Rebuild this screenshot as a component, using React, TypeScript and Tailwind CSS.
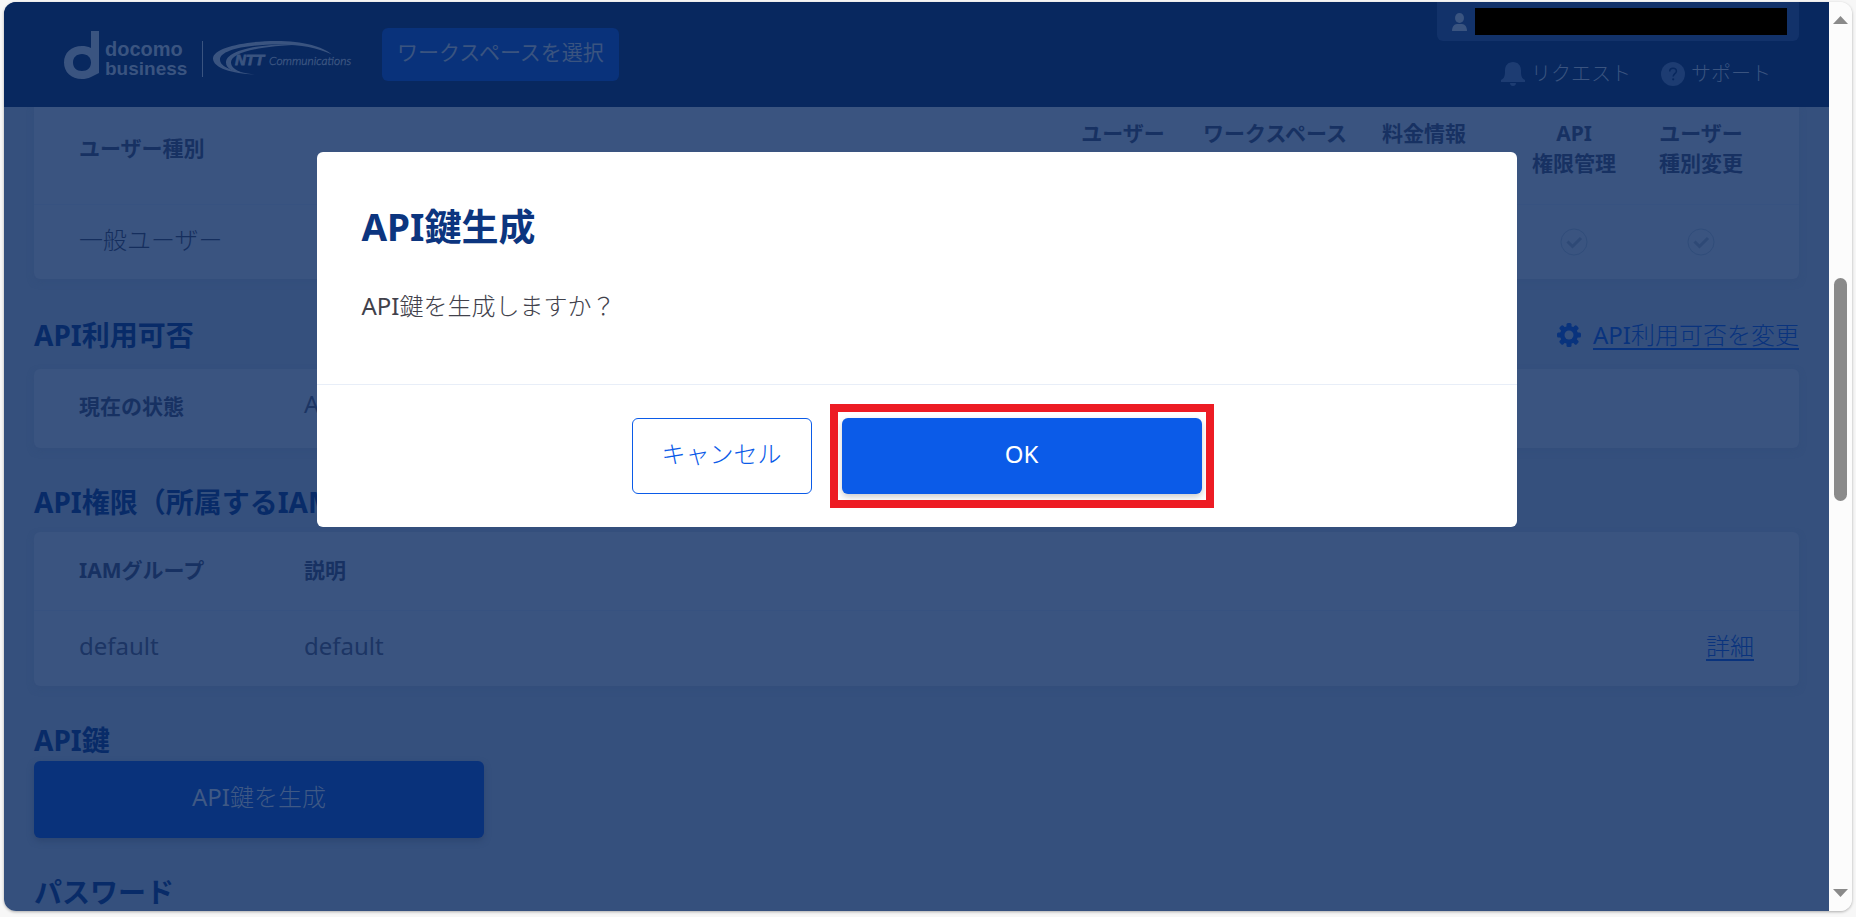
import type { ReactNode } from 'react'

const permissionColumns = [
  { lines: ['ユーザー'], width: 'w-[154px]' },
  { lines: ['ワークスペース'], width: 'w-[150px]' },
  { lines: ['料金情報'], width: 'w-[148px]' },
  { lines: ['API', '権限管理'], width: 'w-[152px]' },
  { lines: ['ユーザー', '種別変更'], width: 'w-[102px]' },
]

function Logo() {
  return (
    <svg width="290" height="52" viewBox="0 0 290 52" fill="#3a5480" role="img" aria-label="docomo business NTT Communications">
      <path
        fillRule="evenodd"
        d="M27 2h8v42l-8 4c-3 1.500-6 2-9 2C7 50 0 43 0 33.500S7 17 18 17c3 0 6 .6 9 2zM18 25c-5.500 0-9 3.500-9 8.500s3.500 8.500 9 8.500 9-3.500 9-8.500-3.500-8.500-9-8.500z"
      />
      <g fontWeight="700" fontFamily="'Liberation Sans', sans-serif">
        <text x="41" y="27" fontSize="20">docomo</text>
        <text x="41" y="46" fontSize="19">business</text>
      </g>
      <rect x="138" y="12" width="1" height="36" />
      <path d="M191 45.500C168 44.500 149 39 149 29.500 149 19 180 12 212 12c28 0 46 5.500 56 13.500-14-6.500-31-10-52-10-36 0-60 6-60 15 0 8 14 12.500 35 15z" />
      <path d="M240 15.500c-40-2-78 5-78 18 0 6 7 9.500 17 10.500-8-3-12-6-12-10.500 0-9 23-16.500 73-18z" />
      <text y="36" fontStyle="italic">
        <tspan x="171" fontSize="15" fontWeight="700" stroke="#3a5480" strokeWidth=".8" fontFamily="'Liberation Sans', sans-serif">NTT</tspan>
        <tspan x="205" fontSize="12" stroke="#3a5480" strokeWidth=".4" fontFamily="Lato, sans-serif">Communications</tspan>
      </text>
    </svg>
  )
}

function UserIcon() {
  return (
    <svg width="15" height="18" viewBox="0 0 15 18" fill="#3a5480" aria-hidden="true">
      <ellipse cx="7.500" cy="5" rx="4.500" ry="5" />
      <path d="M0 18c0-4 2-7 5-7h5c3 0 5 3 5 7z" />
    </svg>
  )
}

function BellIcon() {
  return (
    <svg width="24" height="24" viewBox="0 0 24 24" fill="#1d3c72" aria-hidden="true">
      <path d="M12 0c5 0 8 3.500 8 8.500 0 5 .5 8 4 9.500v2H0v-2c3.500-1.500 4-4.500 4-9.500C4 3.500 7 0 12 0zM9 21h6c0 2-1.200 3-3 3s-3-1-3-3z" />
    </svg>
  )
}

function HelpIcon() {
  return (
    <svg width="24" height="24" viewBox="0 0 24 24" aria-hidden="true">
      <circle cx="12" cy="12" r="12" fill="#1d3c72" />
      <path d="M8.700 9.500c0-2 1.300-3.300 3.300-3.300s3.400 1.200 3.400 3c0 2.400-3.200 2.600-3.200 5.300" fill="none" stroke="#08285f" strokeWidth="1.500" />
      <circle cx="12.200" cy="17.300" r="1.100" fill="#08285f" />
    </svg>
  )
}

function GearIcon() {
  return (
    <svg width="24" height="24" viewBox="0 0 24 24" aria-hidden="true">
      <g fill="#09337d">
        <rect x="9.500" y="0" width="5" height="24" rx="1.500" />
        <rect x="9.500" y="0" width="5" height="24" rx="1.500" transform="rotate(45 12 12)" />
        <rect x="9.500" y="0" width="5" height="24" rx="1.500" transform="rotate(90 12 12)" />
        <rect x="9.500" y="0" width="5" height="24" rx="1.500" transform="rotate(135 12 12)" />
        <circle cx="12" cy="12" r="9" />
      </g>
      <circle cx="12" cy="12" r="4.500" fill="#35507d" />
    </svg>
  )
}

function CheckIcon() {
  return (
    <svg className="mx-auto" width="28" height="28" viewBox="0 0 28 28" fill="none" aria-hidden="true">
      <circle cx="14" cy="14" r="13" stroke="#314d7a" />
      <path d="M7.500 13.500l5 5 8.500-8.500" stroke="#2e4976" strokeWidth="3" />
    </svg>
  )
}

function Heading({ children }: { children: ReactNode }) {
  return <h2 className="text-[28px] leading-9 font-bold text-[#082b68]">{children}</h2>
}

function Header() {
  return (
    <header className="flex h-[105px] shrink-0 items-center bg-[#08285f] font-light">
      <a href="#" className="ml-[60px]">
        <Logo />
      </a>
      <button type="button" className="ml-7 h-[53px] rounded-md bg-[#09327b] px-[15px] pb-1 text-[21px] font-normal text-[#3a5480]">
        ワークスペースを選択
      </button>
      <div className="mr-[30px] ml-auto flex flex-col items-end self-start">
        <div className="flex h-[39px] items-center gap-2 rounded-b-md bg-[#12326a] pr-3 pl-[15px]">
          <UserIcon />
          <div className="h-[27px] w-[312px] bg-black" />
        </div>
        <nav className="mt-[17px] mr-7 flex gap-[30px] text-xl leading-8 text-[#3a5480]">
          <a href="#" className="flex items-center gap-1.5">
            <BellIcon />
            リクエスト
          </a>
          <a href="#" className="flex items-center gap-1.5">
            <HelpIcon />
            サポート
          </a>
        </nav>
      </div>
    </header>
  )
}

function PermissionTable() {
  return (
    <div className="rounded-b-md bg-[#3a5480] shadow-[0_3px_6px_#334e7b]">
      <table className="w-full table-fixed">
        <thead>
          <tr className="text-[21px] leading-[30px] text-[#173162]">
            <th className="pt-[11px] pb-[26px] pl-[45px] text-left">ユーザー種別</th>
            {permissionColumns.map((col) => (
              <th key={col.lines.join('')} className={`${col.width} pt-[11px] pb-[26px] align-top whitespace-nowrap`}>
                {col.lines.map((line) => (
                  <span key={line} className="block">{line}</span>
                ))}
              </th>
            ))}
            <td className="w-[47px]" />
          </tr>
        </thead>
        <tbody>
          <tr className="h-[74px] border-t border-[#375280] text-2xl text-[#152e5d]">
            <td className="pb-1 pl-[45px]">一般ユーザー</td>
            {permissionColumns.map((col) => (
              <td key={col.lines.join('')}>
                <CheckIcon />
              </td>
            ))}
            <td />
          </tr>
        </tbody>
      </table>
    </div>
  )
}

function Content() {
  return (
    <main className="min-h-0 flex-1 overflow-hidden px-[30px] font-light">
      <PermissionTable />

      <div className="mt-9 flex h-10 items-center justify-between">
        <Heading>API利用可否</Heading>
        <a href="#" className="flex items-center gap-3 text-2xl text-[#09337d]">
          <GearIcon />
          <span className="underline decoration-2 underline-offset-4">
            <span className="font-normal">API</span>利用可否を変更
          </span>
        </a>
      </div>
      <dl className="mt-3.5 flex h-[79px] items-center rounded-md bg-[#3a5480] pl-[45px] shadow-[0_3px_6px_#334e7b]">
        <dt className="w-[225px] pb-0.5 text-[21px] font-bold text-[#173162]">現在の状態</dt>
        <dd className="pb-2 text-2xl text-[#1c3564]">
          <span className="font-normal">API</span>利用可
        </dd>
      </dl>

      <div className="mt-9">
        <Heading>API権限（所属するIAMグループ）</Heading>
      </div>
      <div className="mt-3 rounded-md bg-[#3a5480] shadow-[0_3px_6px_#334e7b]">
        <table className="w-full table-fixed">
          <thead>
            <tr className="h-[79px] text-left text-[21px] text-[#173162]">
              <th className="w-[270px] pl-[45px]">IAMグループ</th>
              <th>説明</th>
              <td className="w-[200px]" />
            </tr>
          </thead>
          <tbody>
            <tr className="h-[75px] border-t border-[#375280] text-2xl text-[#1c3564]">
              <td className="pb-1 pl-[45px] font-normal">default</td>
              <td className="pb-1 font-normal">default</td>
              <td className="pr-[45px] pb-1 text-right">
                <a href="#" className="text-[#09337d] underline decoration-2 underline-offset-4">詳細</a>
              </td>
            </tr>
          </tbody>
        </table>
      </div>

      <div className="mt-9">
        <Heading>API鍵</Heading>
      </div>
      <button type="button" className="mt-[3px] block h-[77px] w-[450px] rounded-md bg-[#09327b] pb-1 text-2xl text-[#3f5985] shadow-[0_3px_6px_#2d4671]">
        <span className="font-normal">API</span>鍵を生成
      </button>

      <div className="mt-9">
        <Heading>パスワード</Heading>
      </div>
    </main>
  )
}

function Dialog() {
  return (
    <div className="absolute inset-0 flex items-start justify-center pt-[150px]">
      <div role="dialog" aria-modal="true" aria-labelledby="dialog-title" className="w-full max-w-[1200px] rounded-md bg-white">
        <div className="px-[45px] pt-12 pb-[60px]">
          <h1 id="dialog-title" className="text-[37px] leading-[54px] font-bold text-[#0c357f]">API鍵生成</h1>
          <p className="mt-[34px] text-2xl leading-9 font-light text-[#41414b]">
            <span className="font-normal">API</span>鍵を生成しますか？
          </p>
        </div>
        <div className="flex justify-center gap-[30px] border-t border-[#e8eef8] py-[33px]">
          <button type="button" className="h-[76px] w-[180px] rounded-md border border-[#0b5be8] pb-1 text-2xl font-light text-[#0b5be8]">
            キャンセル
          </button>
          <div className="relative">
            <button type="button" className="h-[76px] w-[360px] rounded-md bg-[#0b5be8] pb-1 text-2xl text-white shadow-[0_3px_6px_rgba(0,0,0,0.2)]">
              OK
            </button>
            <div className="pointer-events-none absolute -inset-x-3 -inset-y-3.5 border-8 border-[#ed1c24]" />
          </div>
        </div>
      </div>
    </div>
  )
}

function Scrollbar() {
  return (
    <div className="flex w-[23px] shrink-0 flex-col items-center bg-[#fcfcfc] py-3.5">
      <svg width="15" height="8" viewBox="0 0 15 8" fill="#8a8a8a" aria-hidden="true">
        <path d="M7.500 0L15 8H0z" />
      </svg>
      <div className="grow-[254]" />
      <div className="h-[223px] w-[13px] rounded-full bg-[#8a8a8a]" />
      <div className="grow-[388]" />
      <svg width="15" height="8" viewBox="0 0 15 8" fill="#8a8a8a" aria-hidden="true">
        <path d="M0 0h15L7.500 8z" />
      </svg>
    </div>
  )
}

export default function App() {
  return (
    <div className="h-screen bg-[#f7f7f7] pt-0.5 pr-1 pb-1.5 pl-1 font-['Noto_Sans','Noto_Sans_CJK_JP',sans-serif]" lang="ja">
      <div className="flex h-full overflow-hidden rounded-xl shadow-[0_1px_3px_rgba(0,0,0,0.3)]">
        <div className="relative flex min-w-0 flex-1 flex-col bg-[#35507d]">
          <Header />
          <Content />
          <Dialog />
        </div>
        <Scrollbar />
      </div>
    </div>
  )
}
